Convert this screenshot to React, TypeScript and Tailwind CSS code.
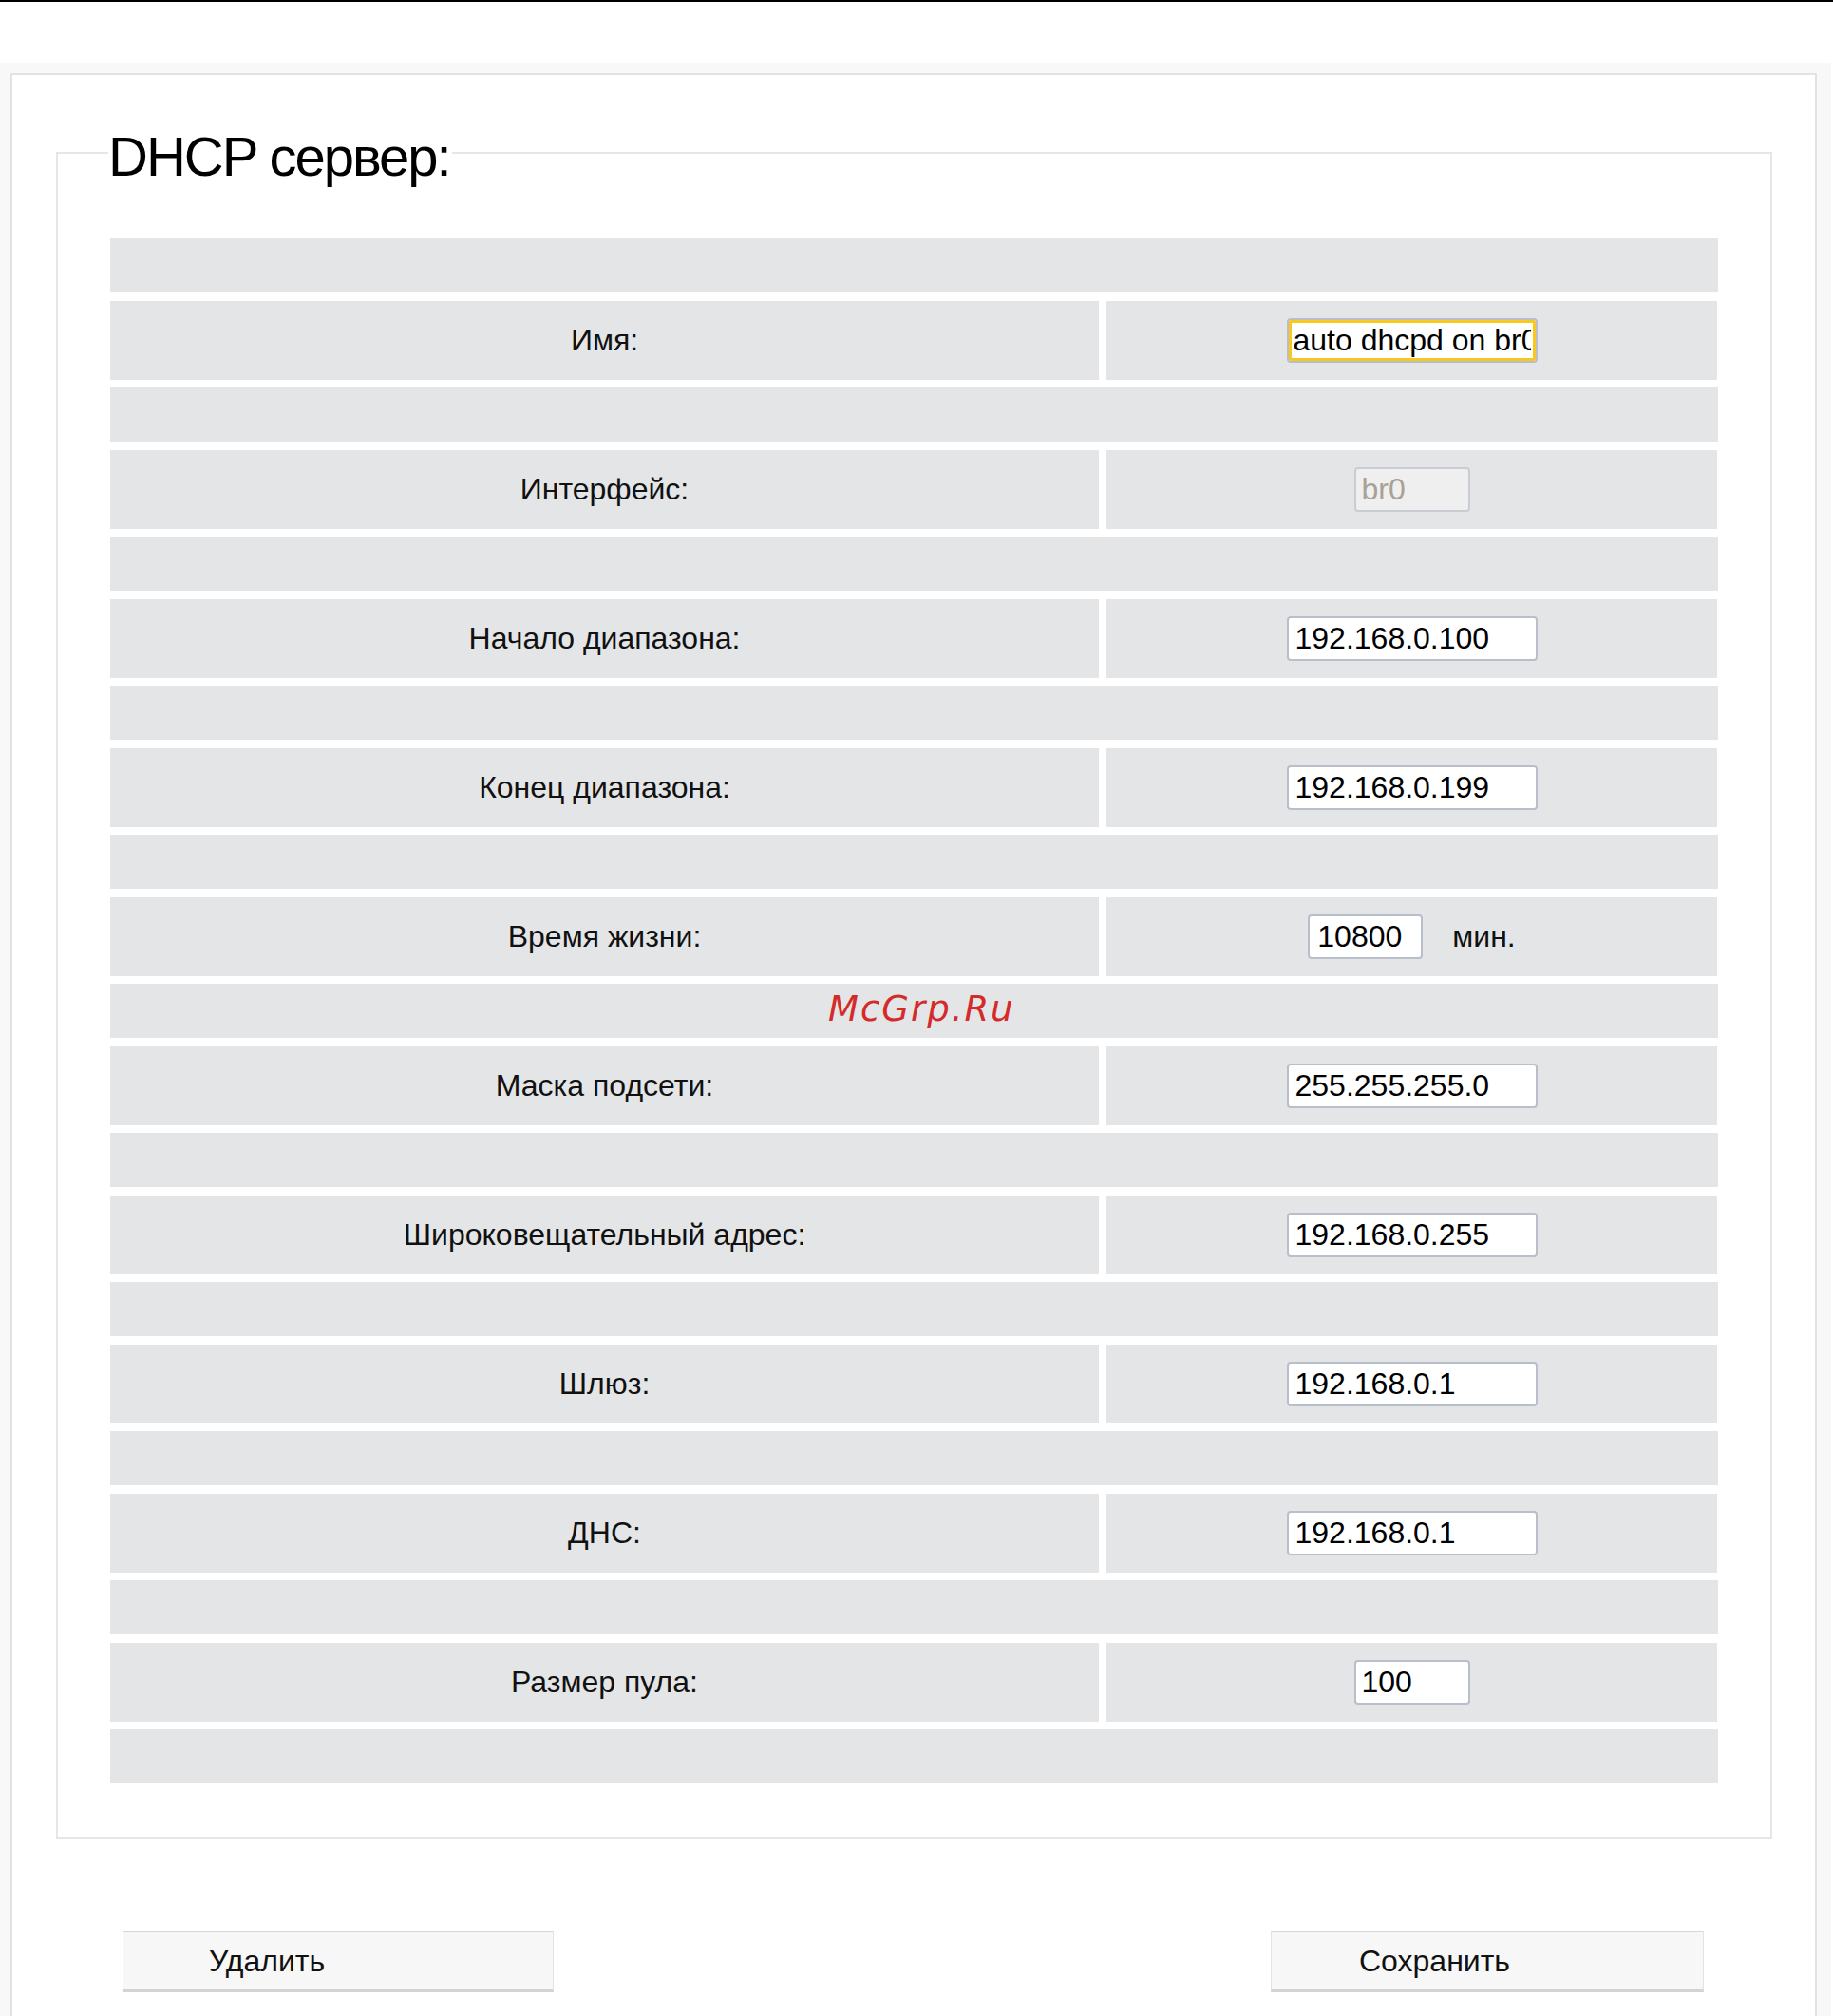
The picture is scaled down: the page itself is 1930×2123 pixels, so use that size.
import React from "react";

const rows: { label: string; kind: "text" | "focus" | "disabled" | "short" | "time"; value: string }[] = [
  { label: "Имя:", kind: "focus", value: "auto dhcpd on br0" },
  { label: "Интерфейс:", kind: "disabled", value: "br0" },
  { label: "Начало диапазона:", kind: "text", value: "192.168.0.100" },
  { label: "Конец диапазона:", kind: "text", value: "192.168.0.199" },
  { label: "Время жизни:", kind: "time", value: "10800" },
  { label: "Маска подсети:", kind: "text", value: "255.255.255.0" },
  { label: "Широковещательный адрес:", kind: "text", value: "192.168.0.255" },
  { label: "Шлюз:", kind: "text", value: "192.168.0.1" },
  { label: "ДНС:", kind: "text", value: "192.168.0.1" },
  { label: "Размер пула:", kind: "short", value: "100" },
];

function Field({ kind, value }: { kind: string; value: string }) {
  if (kind === "focus") {
    return (
      <input
        defaultValue={value}
        className="h-[47px] w-[264px] rounded-[4px] border-2 border-[#b8bfca] bg-white pl-[5px] pr-[5px] text-[32px] text-black shadow-[inset_0_0_0_3px_#f8c81c] outline-none"
      />
    );
  }
  if (kind === "disabled") {
    return (
      <input
        disabled
        defaultValue={value}
        className="h-[47px] w-[122px] rounded-[4px] border-2 border-[#c9cdd3] bg-[#efeff0] pl-[6px] text-[32px] text-[#a8a296]"
      />
    );
  }
  if (kind === "short") {
    return (
      <input
        defaultValue={value}
        className="h-[47px] w-[122px] rounded-[4px] border-2 border-[#b8bfca] bg-white pl-[6px] text-[32px] text-black outline-none"
      />
    );
  }
  if (kind === "time") {
    return (
      <div className="flex items-center gap-[31px]">
        <input
          defaultValue={value}
          className="h-[47px] w-[121px] rounded-[4px] border-2 border-[#b8bfca] bg-white pl-[8px] text-[32px] text-black outline-none"
        />
        <span className="text-[32px] text-[#111]">мин.</span>
      </div>
    );
  }
  return (
    <input
      defaultValue={value}
      className="h-[47px] w-[264px] rounded-[4px] border-2 border-[#b8bfca] bg-white pl-[7px] text-[32px] text-black outline-none"
    />
  );
}

export default function App() {
  return (
    <div className="relative h-[2123px] w-[1930px] overflow-hidden bg-white font-['Liberation_Sans',Arial,sans-serif]">
      <div className="h-[2px] bg-black" />

      <div className="mt-[64px] mr-[2px] bg-[#f8f8f8] pl-[11px] pr-[15px] pt-[11px]">
        <div className="border-2 border-[#e2e2e2] bg-white pb-[120px]">
          {/* DHCP fieldset */}
          <fieldset className="mt-[49px] ml-[46px] mr-[45px] border-2 border-[#e6e6e6] px-[55px] pt-0 pb-[57px]">
            <legend className="-ml-[2px] pl-0 pr-[2px] pt-[8px] text-[58px] leading-none tracking-[-2px] text-black">
              DHCP сервер:
            </legend>

            <div className="mt-[57px] flex flex-col gap-[8.5px]">
              <div className="h-[57px] bg-[#e4e5e7]" />
              {rows.map((r) => (
                <React.Fragment key={r.label}>
                  <div className="grid h-[83px] grid-cols-[1041px_643px] gap-x-[8px]">
                    <div className="flex items-center justify-center bg-[#e4e5e7] text-[32px] text-[#111]">
                      {r.label}
                    </div>
                    <div className="flex items-center justify-center bg-[#e4e5e7]">
                      <Field kind={r.kind} value={r.value} />
                    </div>
                  </div>
                  <div className="h-[57px] bg-[#e4e5e7]" />
                </React.Fragment>
              ))}
            </div>
          </fieldset>

          {/* buttons */}
          <div className="mt-[96px] flex justify-between pl-[116px] pr-[117px]">
            <button className="h-[65px] w-[454px] border-x border-t-2 border-b-[3px] border-x-[#e3e3e3] border-t-[#d6d6d6] border-b-[#d3d3d3] bg-[#f6f7f6] pl-[90px] text-left text-[32px] text-[#111]">
              Удалить
            </button>
            <button className="h-[65px] w-[456px] border-x border-t-2 border-b-[3px] border-x-[#e3e3e3] border-t-[#d6d6d6] border-b-[#d3d3d3] bg-[#f6f7f6] pl-[92px] text-left text-[32px] text-[#111]">
              Сохранить
            </button>
          </div>
        </div>
      </div>

      {/* watermark */}
      <div className="absolute left-[872px] top-[1044px] font-['DejaVu_Sans',sans-serif] text-[37px] italic leading-none tracking-[2px] text-[#d42a2a]">
        McGrp.Ru
      </div>
    </div>
  );
}
